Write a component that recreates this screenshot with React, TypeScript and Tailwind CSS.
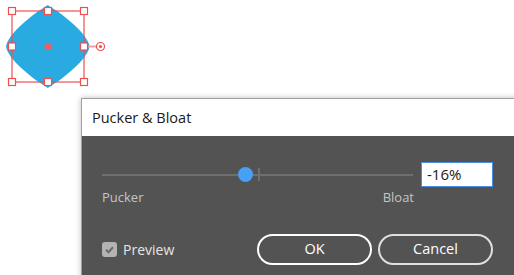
import React from 'react';

const Handle = ({ x, y }: { x: number; y: number }) => (
  <rect x={x - 3.5} y={y - 3.5} width={7} height={7} fill="#ffffff" stroke="#ef4f4f" strokeWidth={1.2} />
);

const SelectedShape = () => {
  const handles = [
    [12, 11], [48, 11], [84, 11],
    [12, 46.5], [84, 46.5],
    [12, 82], [48, 82], [84, 82],
  ];
  return (
    <svg width="110" height="95" viewBox="0 0 110 95" className="absolute left-0 top-0">
      {/* bloated diamond */}
      <path
        d="M6 46.5 C8 34 30 16 47.75 5 C65.5 16 87.5 34 89.5 46.5 C87.5 59 65.5 77 47.75 88 C30 77 8 59 6 46.5 Z"
        fill="#29abe2"
      />
      <rect x={12} y={11} width={72} height={71} fill="none" stroke="#ef4f4f" strokeWidth={1.2} />
      <line x1={87.5} y1={46.5} x2={97} y2={46.5} stroke="#f4a0a0" strokeWidth={2} />
      <circle cx={100.5} cy={46.5} r={4} fill="#ffffff" stroke="#ef4f4f" strokeWidth={1.2} />
      <circle cx={100.5} cy={46.5} r={1.6} fill="#ef4f4f" />
      {handles.map(([x, y]) => (
        <Handle key={`${x}-${y}`} x={x} y={y} />
      ))}
      <circle cx={48} cy={46.5} r={3.5} fill="#f25c5c" />
    </svg>
  );
};

export default function App() {
  return (
    <div className="relative w-[514px] h-[275px] overflow-hidden bg-white" style={{ fontFamily: '"Open Sans", "Noto Sans", sans-serif' }}>
      <SelectedShape />

      {/* Pucker & Bloat dialog */}
      <div className="absolute left-[81px] top-[98px] w-[460px] h-[200px] border border-[#a0a0a0] bg-[#535353] shadow-[0_0_6px_rgba(0,0,0,0.25)]">
        <div className="h-[37px] bg-white flex items-center pl-[10px] text-[14.5px] text-[#1a1a1a]">
          Pucker &amp; Bloat
        </div>

        <div className="pl-[20px] pt-[26px]">
          <div className="flex items-center">
            <div className="relative w-[311px] h-[25px]">
              <div className="absolute left-0 right-0 top-[12px] h-[2px] bg-[#6f6f6f]" />
              <div className="absolute left-[156px] top-[6px] w-[2px] h-[13px] bg-[#6f6f6f]" />
              <div className="absolute left-[136px] top-[5px] w-[15px] h-[15px] rounded-full bg-[#46a0f5]" />
            </div>
            <div className="ml-[8px] w-[72px] h-[25px] bg-white border border-[#4b8fe2] flex items-center pl-[5px] text-[15px] text-[#1a1a1a]">
              -16%
            </div>
          </div>

          <div className="flex justify-between w-[312px] mt-[1px] text-[13px] text-[#c4c4c4]">
            <span>Pucker</span>
            <span>Bloat</span>
          </div>

          <div className="flex items-center mt-[26px]">
            <div className="flex items-center w-[155px]">
              <div className="w-[15px] h-[15px] rounded-[3px] bg-[#b3b3b3] flex items-center justify-center">
                <svg width="11" height="11" viewBox="0 0 11 11">
                  <path d="M2 5.8 L4.4 8.2 L9 3.2" fill="none" stroke="#6a6a6a" strokeWidth={2} />
                </svg>
              </div>
              <span className="ml-[6px] text-[14px] text-[#e6e6e6]">Preview</span>
            </div>
            <button className="w-[115px] h-[31px] rounded-full border-2 border-white text-white text-[14.5px] font-medium">
              OK
            </button>
            <button className="ml-[6px] w-[115px] h-[31px] rounded-full border-2 border-[#e0e0e0] text-white text-[14.5px]">
              Cancel
            </button>
          </div>
        </div>
      </div>
    </div>
  );
}
